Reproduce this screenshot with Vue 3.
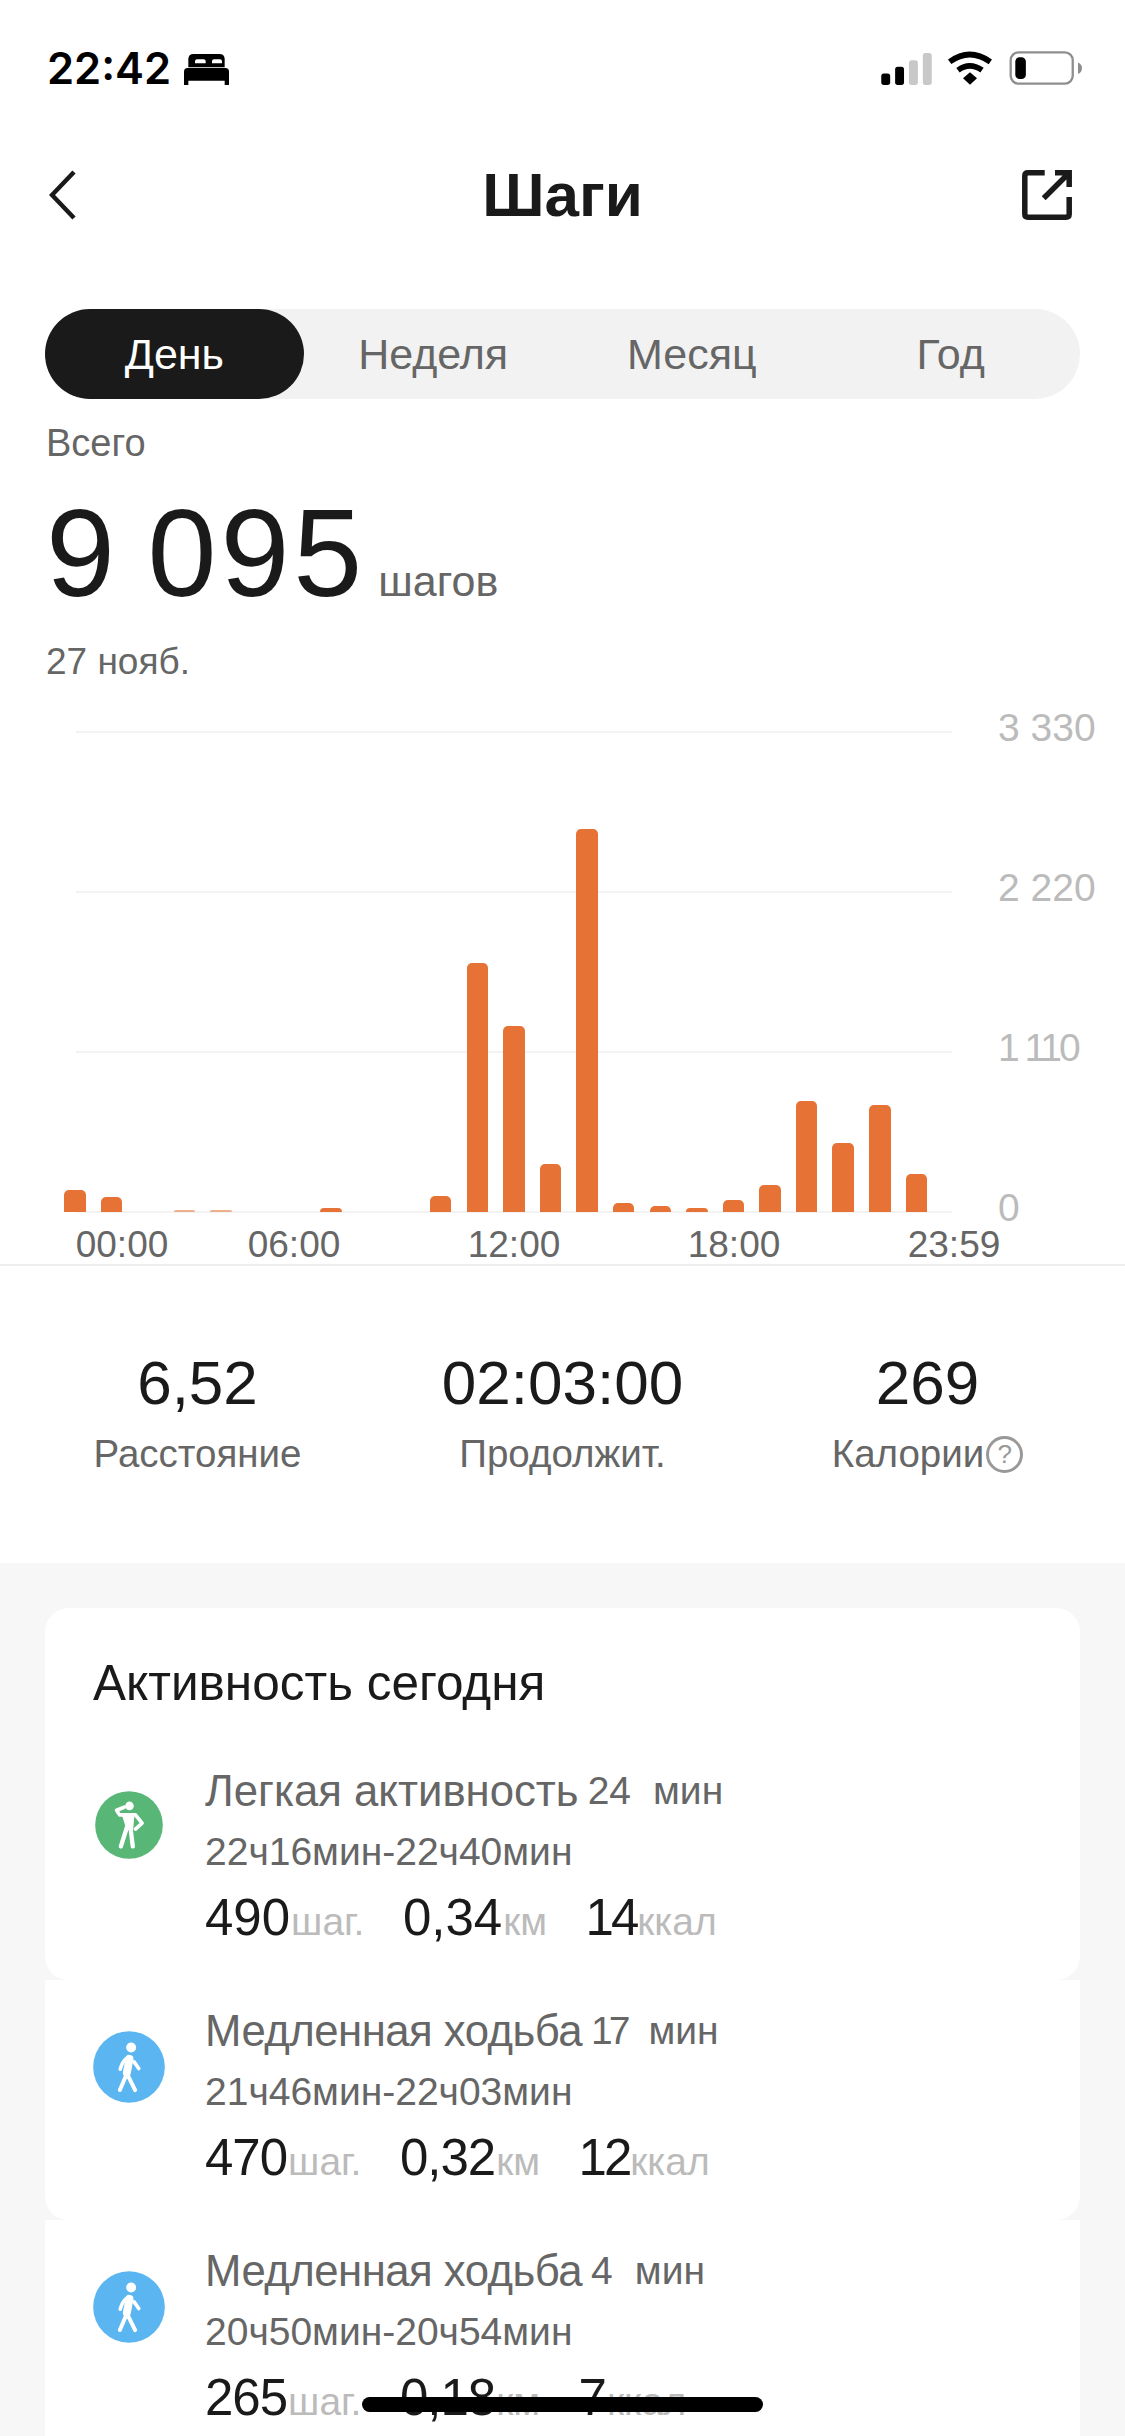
<!--
Шаги: дневная статистика. Итог, график по часам, сводка и список активностей.
-->
<template>
  <div class="page">
    <div class="status">
      <div class="status-left">
        <span class="clock">22:42</span>
        <svg class="bed" viewBox="465 72 135 93">
          <path d="M478 112V88q0-16 16-16h77q16 0 16 16v24z" fill="#000" />
          <path d="M498 100v-6q0-6 6-6h20q6 0 6 6v6zM549 100v-6q0-6 6-6h18q6 0 6 6v6z" fill="#fff" />
          <path d="M465 125q0-11 11-11h113q11 0 11 11v40h-13v-13H478v13h-13z" fill="#000" />
        </svg>
      </div>
      <div class="status-right">
        <svg class="signal" viewBox="66 68 153 97">
          <rect x="66" y="130" width="27" height="35" rx="8" fill="#000" />
          <rect x="108" y="110" width="27" height="55" rx="8" fill="#000" />
          <rect x="150" y="90" width="27" height="75" rx="8" fill="#c8c8c8" />
          <rect x="192" y="68" width="27" height="97" rx="8" fill="#c8c8c8" />
        </svg>
        <svg class="wifi" viewBox="264 62 138 104">
          <path d="M272 97q60-44 122 0M297 122q35-26 72 0" fill="none" stroke="#000" stroke-width="17" />
          <path d="M312 146l21-18 21 18-21 20z" fill="#000" />
        </svg>
        <svg class="battery" viewBox="447 65 222 103">
          <rect x="451" y="69" width="188" height="95" rx="24" fill="none" stroke="#8e8e8e" stroke-width="7" />
          <rect x="465" y="84" width="32" height="66" rx="13" fill="#000" />
          <path d="M655 100q12 5 12 17t-12 18z" fill="#8e8e8e" />
        </svg>
      </div>
    </div>

    <div class="nav">
      <svg class="nav-back" viewBox="0 0 27 50">
        <path d="M25 2L3 25l22 23" fill="none" stroke="#1a1a1a" stroke-width="4.5" />
      </svg>
      <h1 class="nav-title">Шаги</h1>
      <svg class="nav-share" viewBox="0 0 50 50">
        <path d="M22.7 2.8H6q-3.2 0-3.2 3.2v38q0 3.2 3.2 3.2h38q3.2 0 3.2-3.2V27" fill="none" stroke="#1a1a1a" stroke-width="5.5" />
        <path d="M21.7 28.3L45 5M33 2.8h14.2V17" fill="none" stroke="#1a1a1a" stroke-width="5.5" />
      </svg>
    </div>

    <div class="tabs">
      <div v-for="(t, i) in tabs" :key="t" class="tab" :class="{ active: i === 0 }">{{ t }}</div>
    </div>

    <div class="total-label">Всего</div>
    <div class="total">
      <span class="total-num">9 095</span>
      <span class="total-unit">шагов</span>
    </div>
    <div class="total-date">27 нояб.</div>

    <div class="chart">
      <div class="grid">
        <div v-for="l in gridLabels" :key="l" class="grid-row">
          <div class="grid-line"></div>
          <span class="grid-label" :class="{ tight: l === '1 110' }">{{ l }}</span>
        </div>
      </div>
      <div class="bars">
        <div
          v-for="(h, i) in bars"
          :key="i"
          class="bar"
          :class="{ faint: h > 0 && h < 3 }"
          :style="{ height: h + 'px' }"
        ></div>
      </div>
    </div>
    <div class="hours">
      <span v-for="h in hours" :key="h" class="hour">{{ h }}</span>
    </div>

    <div class="stats">
      <div class="stat">
        <div class="stat-num">6,52</div>
        <div class="stat-label">Расстояние</div>
      </div>
      <div class="stat">
        <div class="stat-num">02:03:00</div>
        <div class="stat-label">Продолжит.</div>
      </div>
      <div class="stat">
        <div class="stat-num">269</div>
        <div class="stat-label">Калории<span class="help">?</span></div>
      </div>
    </div>

    <div class="lower">
      <div v-for="(a, i) in activities" :key="a.time" class="card" :class="{ first: i === 0, second: i === 1 }">
        <div v-if="i === 0" class="card-title">Активность сегодня</div>
        <div class="item">
          <div class="item-icon">
            <svg v-if="a.type === 'light'" class="icon-light" viewBox="75 68 205 205">
              <circle cx="177.5" cy="170.5" r="102" fill="#58b677" />
              <circle cx="179" cy="113" r="13" fill="#fff" />
              <path d="M163 117l-23 9 9 14h48l20 25-20 18" fill="none" stroke="#fff" stroke-width="11" stroke-linecap="round" stroke-linejoin="round" />
              <path d="M156 140h38l-4 45H170z" fill="#fff" />
              <path d="M172 175l-19 60M182 178l7 57" fill="none" stroke="#fff" stroke-width="13" stroke-linecap="round" />
            </svg>
            <svg v-else class="icon-walk" viewBox="68 62 217 217">
              <circle cx="176.5" cy="170.5" r="108" fill="#5ab5f0" />
              <circle cx="183" cy="112" r="15" fill="#fff" />
              <path d="M178 146l-8 42" fill="none" stroke="#fff" stroke-width="24" stroke-linecap="round" />
              <path d="M168 145q-12 10-18 32M192 155l14 20" fill="none" stroke="#fff" stroke-width="11" stroke-linecap="round" />
              <path d="M170 190l25 50M166 200l-17 40" fill="none" stroke="#fff" stroke-width="12" stroke-linecap="round" />
            </svg>
          </div>
          <div class="item-body">
            <div class="item-name" :class="{ walk: a.type === 'walk' }">
              <span class="item-label">{{ a.name }}</span>
              <span class="item-dur" :class="{ tight: a.dur === '17' }">{{ a.dur }}</span>
              <span class="item-min">мин</span>
            </div>
            <div class="item-time">{{ a.time }}</div>
            <div class="item-vals">
              <span class="val"><b>{{ a.steps }}</b><i>шаг.</i></span>
              <span class="val"><b>{{ a.km }}</b><i>км</i></span>
              <span class="val" :class="{ tight: a.kcal.length === 2 }"><b>{{ a.kcal }}</b><i>ккал</i></span>
            </div>
          </div>
        </div>
      </div>
    </div>

    <div class="home"></div>
  </div>
</template>

<script setup>
const tabs = ['День', 'Неделя', 'Месяц', 'Год']
const gridLabels = ['3 330', '2 220', '1 110', '0']
const hours = ['00:00', '06:00', '12:00', '18:00', '23:59']
const bars = [22, 15, 0, 2, 2, 0, 0, 4, 0, 0, 16, 249, 186, 48, 383, 9, 6, 4, 12, 27, 111, 69, 107, 38]

const activities = [
  { type: 'light', name: 'Легкая активность', dur: '24', time: '22ч16мин-22ч40мин', steps: '490', km: '0,34', kcal: '14' },
  { type: 'walk', name: 'Медленная ходьба', dur: '17', time: '21ч46мин-22ч03мин', steps: '470', km: '0,32', kcal: '12' },
  { type: 'walk', name: 'Медленная ходьба', dur: '4', time: '20ч50мин-20ч54мин', steps: '265', km: '0,18', kcal: '7' }
]
</script>

<style>
html, body {
  background: #fff;
}
</style>

<style scoped>
.page {
  position: relative;
  width: 1125px;
  height: 2436px;
  overflow: hidden;
  background: #fff;
  color: #1a1a1a;
  font-family: "Liberation Sans", Arial, sans-serif;
}
.status {
  height: 135px;
  padding: 46px 42px 0 47px;
  box-sizing: border-box;
  display: flex;
  justify-content: space-between;
  align-items: flex-start;
}
.status-left {
  display: flex;
  align-items: center;
  gap: 13px;
  height: 44px;
}
.clock {
  font-family: Inter, sans-serif;
  font-weight: 600;
  font-size: 43.5px;
  line-height: 44px;
  color: #000;
}
.bed {
  width: 45px;
  height: 31px;
  margin-top: 3px;
}
.status-right {
  display: flex;
  align-items: flex-end;
  height: 36px;
  margin-top: 3px;
}
.signal {
  width: 51px;
  height: 32px;
}
.wifi {
  width: 46px;
  height: 35px;
  margin-left: 15px;
}
.battery {
  width: 74px;
  height: 34px;
  margin-left: 16px;
}
.nav {
  height: 120px;
  padding: 0 53px 0 49px;
  display: grid;
  grid-template-columns: 1fr auto 1fr;
  align-items: center;
}
.nav-back {
  width: 27px;
  height: 50px;
}
.nav-title {
  margin: 0 0 0 4px;
  font-size: 62px;
  font-weight: 700;
  line-height: 70px;
}
.nav-share {
  width: 50px;
  height: 50px;
  justify-self: end;
}
.tabs {
  margin: 54px 45px 0;
  height: 90px;
  display: grid;
  grid-template-columns: repeat(4, 1fr);
  background: #f2f2f2;
  border-radius: 45px;
}
.tab {
  display: flex;
  align-items: center;
  justify-content: center;
  font-size: 43px;
  color: #666;
  border-radius: 45px;
}
.tab.active {
  background: #1a1a1a;
  color: #fff;
}
.total-label {
  margin: 24px 46px 0;
  font-size: 38px;
  line-height: 40px;
  color: #666;
}
.total {
  margin: 30px 46px 0;
  display: flex;
  align-items: baseline;
  height: 120px;
}
.total-num {
  font-size: 124px;
  line-height: 120px;
  letter-spacing: 4px;
  word-spacing: -10px;
}
.total-unit {
  margin-left: 12px;
  font-size: 43px;
  color: #666;
}
.total-date {
  margin: 29px 46px 0;
  font-size: 37px;
  line-height: 40px;
  color: #666;
}
.chart {
  position: relative;
  margin-top: 49px;
  height: 482px;
}
.grid {
  margin-left: 76px;
  height: 100%;
  display: flex;
  flex-direction: column;
  justify-content: space-between;
}
.grid-row {
  display: flex;
  align-items: center;
  height: 2px;
}
.grid-line {
  width: 876px;
  height: 2px;
  background: #f3f3f3;
}
.grid-label {
  margin: -8px 0 0 46px;
  font-size: 39px;
  line-height: 40px;
  color: #bbb;
}
.grid-label.tight {
  letter-spacing: -3px;
}
.bars {
  position: absolute;
  left: 64px;
  bottom: 1px;
  display: flex;
  align-items: flex-end;
  gap: 15.1px;
}
.bar {
  width: 21.5px;
  background: #e67335;
  border-radius: 5px 5px 0 0;
}
.bar.faint {
  opacity: 0.55;
}
.hours {
  height: 39px;
  margin-top: 12px;
  padding-left: 122px;
  display: flex;
  gap: 220px;
  border-bottom: 2px solid #eee;
}
.hour {
  width: 0;
  display: flex;
  justify-content: center;
  white-space: nowrap;
  font-size: 37px;
  line-height: 40px;
  color: #666;
}
.hour:first-child {
  margin-right: -48px;
}
.stats {
  height: 297px;
  padding: 82px 15px 0;
  box-sizing: border-box;
  display: grid;
  grid-template-columns: repeat(3, 1fr);
  align-items: start;
  text-align: center;
}
.stat-num {
  font-size: 62px;
  line-height: 70px;
}
.stat-label {
  margin-top: 15px;
  font-size: 38.5px;
  line-height: 42px;
  color: #666;
  display: flex;
  align-items: center;
  justify-content: center;
}
.help {
  width: 31px;
  height: 31px;
  margin-left: 2px;
  border: 3px solid #999;
  border-radius: 50%;
  font-size: 26px;
  line-height: 31px;
  color: #999;
}
.lower {
  background: #f7f7f7;
  padding: 45px 45px 0;
  height: 873px;
  box-sizing: border-box;
}
.card {
  background: #fff;
  padding: 27px 48px 34px;
}
.card.first {
  padding-top: 49px;
  border-radius: 24px;
}
.card.second {
  border-radius: 0 0 24px 24px;
}
.card-title {
  margin-bottom: 31px;
  font-size: 49.5px;
  line-height: 52px;
}
.item {
  display: flex;
  align-items: flex-start;
  gap: 40px;
}
.card.first .item {
  padding-top: 27px;
}
.item-icon {
  width: 72px;
  margin-top: 24px;
  display: flex;
  justify-content: center;
}
.icon-light {
  width: 68px;
  height: 68px;
}
.icon-walk {
  width: 72px;
  height: 72px;
}
.item-name {
  height: 48px;
  display: flex;
  align-items: center;
  font-size: 43.7px;
  line-height: 48px;
  color: #666;
}
.item-name.walk .item-label {
  letter-spacing: -0.5px;
}
.item-dur {
  margin-left: 9px;
  font-size: 39px;
}
.item-dur.tight {
  letter-spacing: -4px;
}
.item-min {
  margin-left: 22px;
  font-size: 39px;
}
.item-time {
  margin-top: 16px;
  font-size: 39px;
  line-height: 42px;
  color: #666;
}
.item-vals {
  margin-top: 17px;
  height: 56px;
  display: flex;
  gap: 38.5px;
  line-height: 56px;
}
.val {
  display: flex;
  align-items: baseline;
}
.val b {
  font-weight: 400;
  font-size: 51px;
}
.card:not(.first) .val b {
  letter-spacing: -1px;
}
.val.tight b,
.card:not(.first) .val.tight b {
  letter-spacing: -3px;
}
.val i {
  margin-left: 1px;
  font-style: normal;
  font-size: 39px;
  color: #bbb;
}
.home {
  position: absolute;
  left: 362px;
  top: 2397px;
  width: 401px;
  height: 15px;
  background: #000;
  border-radius: 8px;
}
</style>
